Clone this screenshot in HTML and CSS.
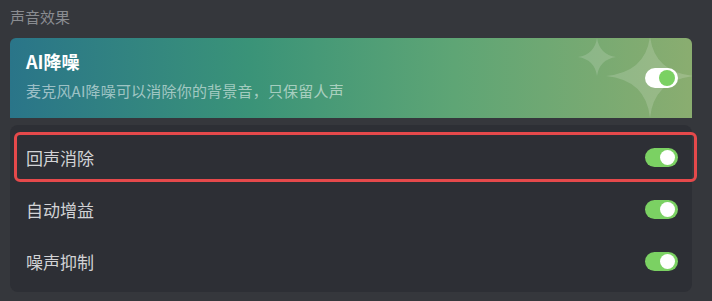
FILE: index.html
```html
<!DOCTYPE html>
<html lang="zh-CN">
<head>
<meta charset="utf-8">
<link rel="stylesheet" href="styles.css">
</head>
<body>
<div class="page">
  <div class="section-title">声音效果</div>
  <div class="ai-card">
    <svg class="stars" width="682" height="80" viewBox="0 0 682 80" aria-hidden="true">
      <path d="M587 0 Q589.5 16.5 606 19 Q589.5 21.5 587 38 Q584.5 21.5 568 19 Q584.5 16.5 587 0Z" fill="#ffffff" fill-opacity="0.16"/>
      <path d="M640 -2 Q644 34 684 38 Q644 42 640 80 Q636 42 596 38 Q636 34 640 -2Z" fill="#ffffff" fill-opacity="0.16"/>
    </svg>
    <div class="ai-text">
      <div class="ai-title">AI降噪</div>
      <div class="ai-desc">麦克风AI降噪可以消除你的背景音，只保留人声</div>
    </div>
    <div class="toggle toggle-light"><span class="knob"></span></div>
  </div>
  <div class="list-card">
    <div class="row">
      <span class="row-label">回声消除</span>
      <div class="toggle"><span class="knob"></span></div>
      <div class="highlight"></div>
    </div>
    <div class="row">
      <span class="row-label">自动增益</span>
      <div class="toggle"><span class="knob"></span></div>
    </div>
    <div class="row">
      <span class="row-label">噪声抑制</span>
      <div class="toggle"><span class="knob"></span></div>
    </div>
  </div>
</div>
</body>
</html>
```

FILE: styles.css
```css
html, body {
  margin: 0;
  padding: 0;
  background: #35373c;
}
body {
  font-family: "Noto Sans CJK SC", "Noto Sans", sans-serif;
  width: 712px;
  height: 301px;
  overflow: hidden;
}
.page {
  padding: 0 20px 0 10px;
}
.section-title {
  height: 38px;
  line-height: 34px;
  font-size: 15px;
  color: #8a8c91;
}
.ai-card {
  position: relative;
  height: 80px;
  border-radius: 6px 6px 0 0;
  background: linear-gradient(90deg, #2a7589 0%, #3a9378 35%, #5ea575 65%, #8aad70 100%);
  display: flex;
  align-items: center;
  justify-content: space-between;
  padding: 0 14px 0 16px;
  overflow: hidden;
}
.stars {
  position: absolute;
  left: 0;
  top: 0;
}
.ai-text {
  position: relative;
  display: flex;
  flex-direction: column;
  gap: 8px;
  margin-top: -6px;
}
.ai-title {
  font-size: 18px;
  font-weight: 700;
  color: #ffffff;
  line-height: 24px;
}
.ai-desc {
  font-size: 15px;
  letter-spacing: 0.2px;
  color: rgba(255, 255, 255, 0.55);
  line-height: 20px;
}
.toggle {
  position: relative;
  width: 33px;
  height: 19px;
  border-radius: 10px;
  background: #7bd163;
  flex: none;
}
.toggle .knob {
  position: absolute;
  right: 3px;
  top: 2px;
  width: 15px;
  height: 15px;
  border-radius: 50%;
  background: #ffffff;
}
.toggle-light {
  background: #ffffff;
  height: 20px;
}
.toggle-light .knob {
  background: #7bd163;
  width: 16px;
  height: 16px;
  right: 3px;
}
.list-card {
  margin-top: 7px;
  background: #2d2f35;
  border-radius: 8px;
  padding: 6px 0 5px;
}
.row {
  position: relative;
  height: 52px;
  display: flex;
  align-items: center;
  justify-content: space-between;
  padding: 0 14px 0 16px;
}
.row-label {
  font-size: 17px;
  color: #d2d3d6;
}
.highlight {
  position: absolute;
  left: 4px;
  right: -5px;
  top: 1px;
  bottom: 1px;
  border: 3px solid #e5494b;
  border-radius: 6px;
  pointer-events: none;
}
```
